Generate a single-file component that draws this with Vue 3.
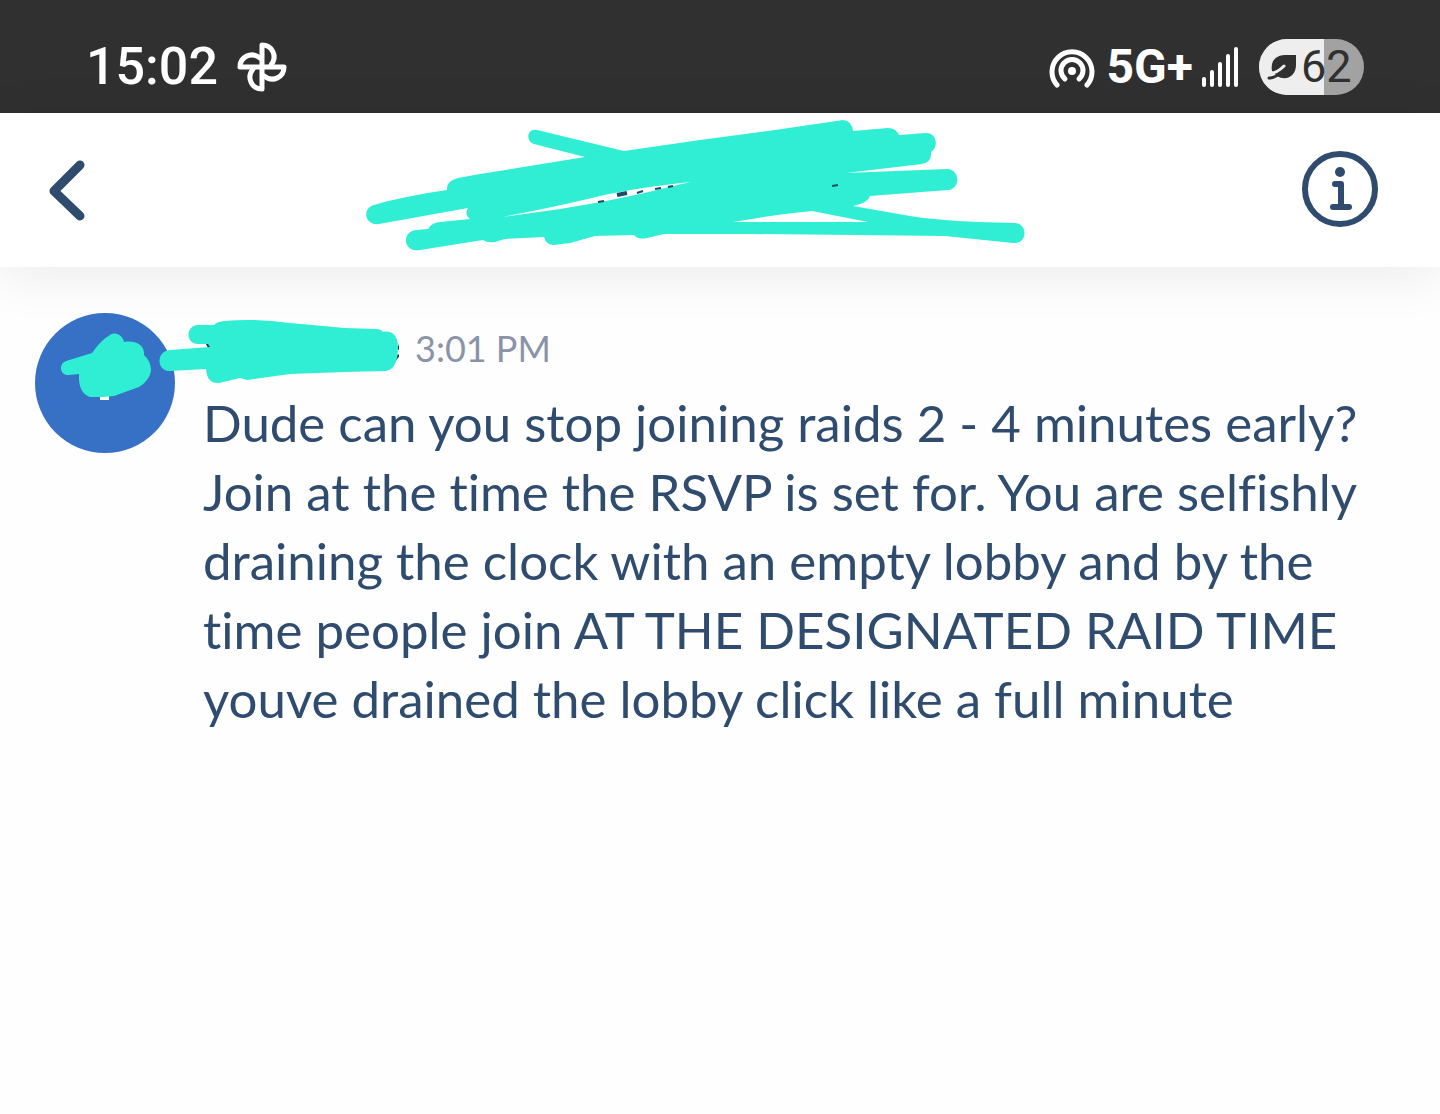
<!-- 聊天会话页 - 状态栏、标题栏与消息列表 -->
<template>
  <div class="chat-page">
    <div class="status-bar">
      <div class="status-group">
        <span class="clock">{{ status.time }}</span>
        <svg class="icon-pinwheel" viewBox="0 0 52 52" aria-hidden="true">
          <g fill="none" stroke="#fff" stroke-width="5" stroke-linejoin="round" stroke-linecap="round">
            <path d="M26 26V4C36 4 42 15 35 24" />
            <path d="M26 26H48C48 36 37 42 28 35" />
            <path d="M26 26V48C16 48 10 37 17 28" />
            <path d="M26 26H4C4 16 15 10 24 17" />
          </g>
        </svg>
      </div>

      <div class="status-group">
        <svg class="icon-hotspot" viewBox="0 0 46 42" aria-hidden="true">
          <g fill="none" stroke="#fff" stroke-width="5" stroke-linecap="round">
            <path d="M8 39A20 20 0 1 1 38 39" />
            <path d="M16 33A11 11 0 1 1 30 33" />
          </g>
          <circle cx="23" cy="25" r="4" fill="#fff" />
        </svg>
        <span class="network">{{ status.network }}</span>
        <svg class="icon-signal" viewBox="0 0 38 42" aria-hidden="true">
          <g stroke="#fff" stroke-width="4" stroke-linecap="round">
            <path d="M3 33V39M11 26V39M19 18V39M27 10V39M35 3V39" />
          </g>
        </svg>
        <div class="battery">
          <span class="battery-level" :style="{ width: status.battery + '%' }"></span>
          <svg class="icon-leaf" viewBox="0 0 30 26" aria-hidden="true">
            <path d="M5 17C3 6 10 1 18 1H29V11C29 21 20 28 10 22Z" fill="#303030" />
            <path d="M17 12C13 16 8 19 4 19" fill="none" stroke="#eee" stroke-width="3" stroke-linecap="round" />
            <path d="M2 24C7 24 10 22 13 19" fill="none" stroke="#303030" stroke-width="3" stroke-linecap="round" />
          </svg>
          <span class="battery-value">{{ status.battery }}</span>
        </div>
      </div>
    </div>

    <header class="chat-header">
      <button class="icon-button back" type="button" aria-label="Back">
        <svg viewBox="0 0 38 62" aria-hidden="true">
          <path d="M32 6L6 32L32 57" fill="none" stroke="#2f4b6e" stroke-width="9" stroke-linecap="round" stroke-linejoin="round" />
        </svg>
      </button>

      <!-- 涂抹遮盖的会话标题 -->
      <svg class="title-scribble" viewBox="360 113 668 154" aria-hidden="true">
        <path
          fill="#30eed4"
          fill-rule="evenodd"
          d="M374 205Q400 197 447 190Q446 181 458 178L480 174L585 157L534 144C526 142 526 128 537 130L624 151L700 140L775 130L843 120Q852 121 853 131L888 128Q896 128 899 135L926 133C937 133 939 147 931 152Q932 162 922 164L846 173L947 169C960 169 961 189 948 190L870 196Q868 203 853 206L910 216Q935 220 978 222L1015 223C1028 224 1028 244 1013 243L945 236L750 234H664L647 238Q638 240 634 235L595 236L570 243L554 245Q546 245 544 237L505 239L495 242Q487 243 483 240L420 250C403 253 401 232 416 230L428 229Q431 223 440 222L470 219Q464 214 468 208L379 224C364 226 362 208 374 205ZM502 217L560 209Q600 203 640 194L690 182Q635 188 600 196Q560 206 502 217ZM733 222H868L812 211Q780 214 752 219Z"
        />
        <path
          d="M598 202L604 201M637 193L643 191M655 189L661 188M668 187L673 186M832 186L838 185"
          stroke="#1f4a66"
          stroke-width="2"
        />
        <path d="M617 195L627 193" stroke="#1f4a66" stroke-width="4" />
      </svg>

      <button class="icon-button info" type="button" aria-label="Info">
        <svg viewBox="0 0 78 78" aria-hidden="true">
          <circle cx="38" cy="38" r="35" fill="none" stroke="#2f4b6e" stroke-width="6" />
          <circle cx="38" cy="21" r="5" fill="#2f4b6e" />
          <path d="M33 33H39V56M31 56H47" fill="none" stroke="#2f4b6e" stroke-width="6" stroke-linecap="round" stroke-linejoin="round" />
        </svg>
      </button>
    </header>

    <main class="message-list">
      <article v-for="message in messages" :key="message.id" class="message">
        <div class="avatar">
          <svg viewBox="35 313 140 140" aria-hidden="true">
            <path d="M100 396H109V400H100Z" fill="#fff" />
            <path
              fill="#30eed4"
              d="M66 361L92 353Q101 340 110 335C116 331 123 336 124 342C137 340 145 346 144 355Q151 361 151 371Q149 381 139 387L114 396L103 397H90Q78 393 79 374L69 375C60 376 58 364 66 361Z"
            />
          </svg>
        </div>

        <div class="message-body">
          <div class="message-meta">
            <!-- 涂抹遮盖的发送者名称 -->
            <svg class="name-scribble" viewBox="158 316 244 70" aria-hidden="true">
              <path d="M206 344H212V348H208ZM397 349L399 344V350ZM394 357L399 354V357L396 360Z" fill="#123d52" />
              <path
                fill="#30eed4"
                d="M197 325L214 325Q216 322 224 321Q255 318 290 323L345 328L376 329Q381 329 383 332C392 330 398 336 398 347Q398 369 386 371L345 372L290 374L247 380L240 378L219 383Q207 384 206 369L170 371C156 371 156 351 170 350L210 347L208 344H198C186 344 185 327 197 325Z"
              />
            </svg>
            <time class="message-time">{{ message.time }}</time>
          </div>
          <p class="message-text">{{ message.text }}</p>
        </div>
      </article>
    </main>
  </div>
</template>

<script setup>
import { reactive, ref } from 'vue';

const status = reactive({
  time: '15:02',
  network: '5G+',
  battery: 62,
});

const messages = ref([
  {
    id: 1,
    time: '3:01 PM',
    text: [
      'Dude can you stop joining raids 2 - 4 minutes early?',
      'Join at the time the RSVP is set for. You are selfishly',
      'draining the clock with an empty lobby and by the',
      'time people join AT THE DESIGNATED RAID TIME',
      'youve drained the lobby click like a full minute',
    ].join('\n'),
  },
]);
</script>

<style>
body {
  margin: 0;
  background: #fefefe;
}
</style>

<style scoped>
.chat-page {
  min-height: 100vh;
  background: #fefefe;
  color: #2f4b6e;
  font-family: Lato, 'Open Sans', sans-serif;
}

.chat-page svg {
  display: block;
  flex: none;
}

.status-bar {
  display: flex;
  align-items: center;
  justify-content: space-between;
  box-sizing: border-box;
  height: 113px;
  padding: 21px 76px 0 86px;
  background: #303030;
  color: #fff;
  font-family: Roboto, sans-serif;
}

.status-group {
  display: flex;
  align-items: center;
}

.clock {
  font-size: 52px;
  font-weight: 500;
  line-height: 56px;
}

.icon-pinwheel {
  width: 52px;
  height: 52px;
  margin-left: 18px;
}

.icon-hotspot {
  width: 46px;
  height: 42px;
  margin-right: 12px;
}

.network {
  font-size: 48px;
  font-weight: 700;
  line-height: 56px;
}

.icon-signal {
  width: 38px;
  height: 42px;
  margin: 0 20px 0 8px;
}

.battery {
  position: relative;
  display: flex;
  align-items: center;
  box-sizing: border-box;
  width: 105px;
  height: 56px;
  padding-left: 8px;
  border-radius: 28px;
  overflow: hidden;
  background: #a2a2a2;
  color: #303030;
}

.battery-level {
  position: absolute;
  top: 0;
  bottom: 0;
  left: 0;
  background: #eee;
}

.icon-leaf {
  position: relative;
  width: 30px;
  height: 26px;
  margin-right: 4px;
}

.battery-value {
  position: relative;
  font-size: 45px;
  line-height: 56px;
}

.chat-header {
  display: flex;
  align-items: center;
  justify-content: space-between;
  height: 154px;
  padding: 0 60px 0 48px;
  background: #fff;
  box-shadow: 0 8px 50px rgba(0, 0, 0, 0.08);
}

.icon-button {
  flex: none;
  padding: 0;
  border: 0;
  background: none;
  cursor: pointer;
}

.back {
  width: 38px;
  height: 62px;
}

.info {
  width: 78px;
  height: 78px;
}

.title-scribble {
  width: 668px;
  height: 154px;
}

.message-list {
  padding: 46px 35px;
}

.message {
  display: flex;
  gap: 28px;
}

.avatar {
  flex: none;
  width: 140px;
  height: 140px;
  border-radius: 50%;
  overflow: hidden;
  background: #3671c6;
}

.message-body {
  flex: 1;
  min-width: 0;
}

.message-meta {
  display: flex;
  align-items: center;
  height: 75px;
}

.name-scribble {
  width: 244px;
  height: 70px;
  margin-left: -45px;
}

.message-time {
  margin-left: 13px;
  padding-bottom: 6px;
  color: #8a94a6;
  font-size: 36px;
  line-height: 70px;
}

.message-text {
  margin: 0;
  font-size: 51px;
  font-variant-ligatures: none;
  line-height: 69px;
  white-space: pre-line;
}
</style>
